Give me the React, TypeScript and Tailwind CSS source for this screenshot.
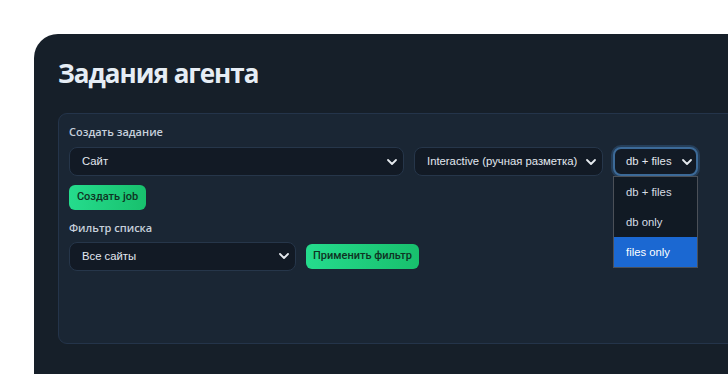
import { ChevronDown } from "lucide-react";

const sans = "font-['Open_Sans','Noto_Sans',sans-serif]";
const arial = "font-['Liberation_Sans',Arial,sans-serif]";
const roboto = "font-['Roboto','Liberation_Sans',sans-serif]";

function Select({ label, width, focused }: { label: string; width: string; focused?: boolean }) {
  return (
    <div
      className={`${width} h-[29px] shrink-0 flex items-center justify-between whitespace-nowrap rounded-lg bg-[#121a25] text-[11.3px] text-[#e2e8f0] ${arial} ${
        focused
          ? "border-2 border-[#3c6a98] pl-[11px] pr-[1px] shadow-[0_0_0_2px_rgba(60,110,160,0.35)]"
          : "border border-[#26364a] pl-[12px] pr-[3px]"
      }`}
    >
      <span>{label}</span>
      <ChevronDown size={16} strokeWidth={2.75} className="shrink-0 text-[#e5e9ee]" />
    </div>
  );
}

function Button({ label, width }: { label: string; width: string }) {
  return (
    <button
      className={`${width} h-[25px] whitespace-nowrap rounded-md bg-gradient-to-r from-[#25dc8d] to-[#18c06d] text-[11px] font-medium text-[#0f3323] ${roboto}`}
    >
      {label}
    </button>
  );
}

export default function App() {
  return (
    <div className="h-[374px] w-[728px] overflow-hidden bg-white">
      <div className="ml-[34px] mt-[34px] h-[340px] w-[760px] rounded-tl-[24px] bg-[#161f29] pl-[24px] pt-[21px]">
        <h1 className={`text-[26px] font-bold leading-[36px] tracking-[-1px] text-[#e6edf5] ${sans}`}>
          Задания агента
        </h1>

        <section className="mt-[22px] h-[231px] rounded-[9px] border border-[#24344a] bg-[#1a2634] pl-[10px] pt-[10px]">
          <h2 className={`text-[11px] font-semibold leading-[16px] text-[#c6d0db] ${sans}`}>Создать задание</h2>
          <div className="mt-[7px] flex items-start gap-[10px]">
            <Select label="Сайт" width="w-[335px]" />
            <Select label="Interactive (ручная разметка)" width="w-[189px]" />
            <div className="relative">
              <Select label="db + files" width="w-[85px]" focused />
              <ul
                className={`absolute left-0 top-[29px] w-[85px] border border-[#4b5058] bg-[#111a24] text-[11.3px] text-[#d6dde5] ${arial}`}
              >
                <li className="flex h-[30px] items-center pl-[12px]">db + files</li>
                <li className="flex h-[30px] items-center pl-[12px]">db only</li>
                <li className="flex h-[30px] items-center bg-[#1b68d2] pl-[12px] text-white">files only</li>
              </ul>
            </div>
          </div>

          <div className="mt-[6px]">
            <Button label="Создать job" width="w-[77px]" />
          </div>

          <h2 className={`mt-[10px] text-[11px] font-semibold leading-[16px] text-[#c6d0db] ${sans}`}>Фильтр списка</h2>
          <div className="mt-[6px] flex items-center gap-[10px]">
            <Select label="Все сайты" width="w-[227px]" />
            <Button label="Применить фильтр" width="w-[113px]" />
          </div>
        </section>
      </div>
    </div>
  );
}
